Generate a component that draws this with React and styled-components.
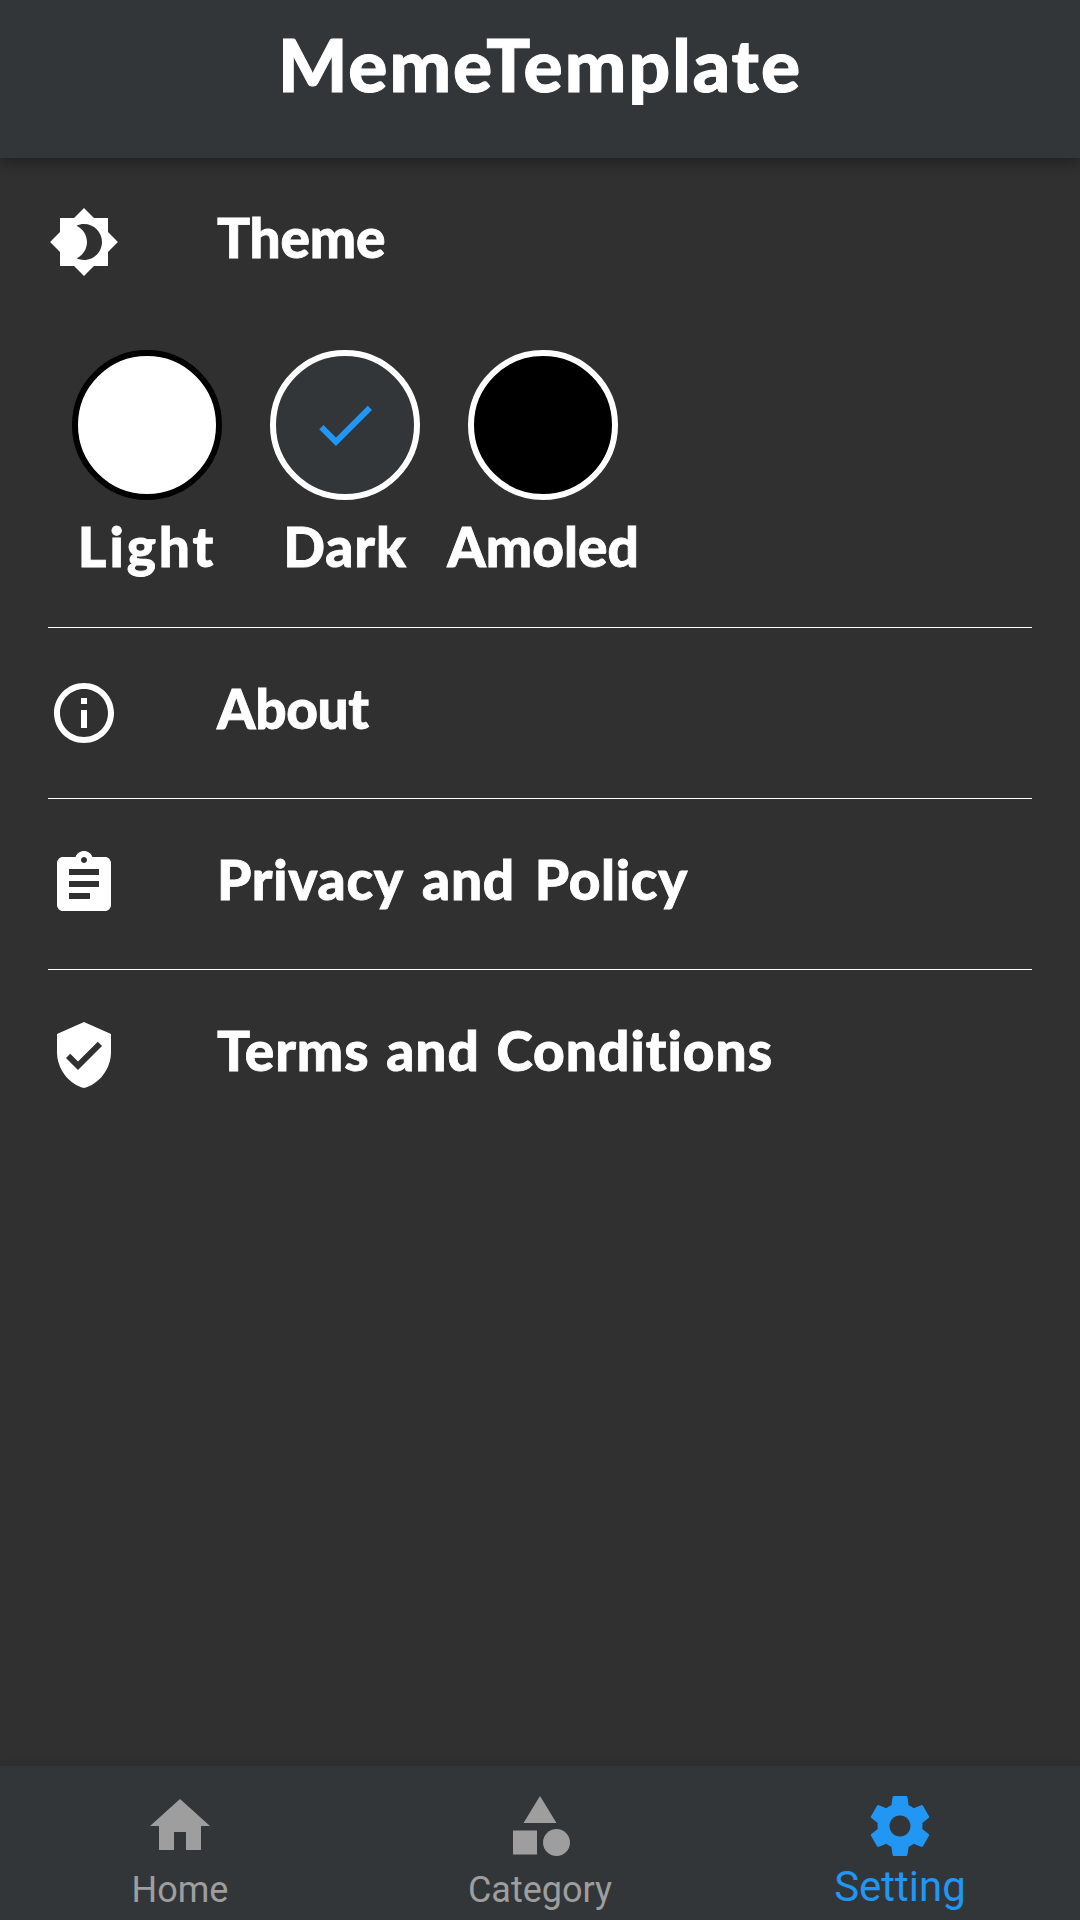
import React, { useState } from 'react'
import styled, { createGlobalStyle } from 'styled-components'
import {
  MdBrightness4,
  MdInfoOutline,
  MdAssignment,
  MdVerifiedUser,
  MdHome,
  MdCategory,
  MdCheck,
} from 'react-icons/md'

const GlobalStyle = createGlobalStyle`
  * {
    box-sizing: border-box;
  }

  body {
    margin: 0;
    background-color: #303030;
    color: #fff;
    font-family: Lato, 'Open Sans', sans-serif;
  }
`

const Screen = styled.div`
  display: flex;
  flex-direction: column;
  height: 1920px;
  overflow: hidden;
  background-color: #303030;
`

const Header = styled.header`
  height: 158px;
  padding-top: 20px;
  text-align: center;
  background-color: #323639;
  box-shadow: 0 6px 12px rgba(0, 0, 0, .2), 0 3px 15px rgba(0, 0, 0, .12);
`

const Title = styled.h1`
  margin: 0;
  font-size: 73px;
  line-height: 88px;
  font-weight: 900;
  letter-spacing: 2.05px;
  -webkit-text-stroke: 1px #fff;
`

const Content = styled.main`
  flex: 1;
  padding: 0 48px;
`

const Label = styled.span`
  font-size: 55px;
  line-height: 66px;
  font-weight: 900;
  letter-spacing: ${(p) => p.$spacing}px;
  word-spacing: ${(p) => p.$wordSpacing || 0}px;
  font-variant-ligatures: none;
  white-space: nowrap;
  -webkit-text-stroke: .8px #fff;
`

const Row = styled.div`
  display: flex;
  align-items: center;
  gap: 97px;
  height: ${(p) => p.$height || 170}px;

  svg {
    width: 72px;
    height: 72px;
  }

  ${Label} {
    padding-bottom: 10px;
  }
`

const Divider = styled.hr`
  height: 1px;
  margin: 0;
  border: 0;
  background-color: #fff;
`

const Swatches = styled.div`
  display: flex;
  padding: 24px 0 48px;
`

const Swatch = styled.div`
  display: flex;
  flex-direction: column;
  align-items: center;
  gap: 13px;
  width: 198px;
`

const Circle = styled.div`
  display: flex;
  align-items: center;
  justify-content: center;
  width: 150px;
  height: 150px;
  border: 6px solid ${(p) => p.$border};
  border-radius: 50%;
  background-color: ${(p) => p.$color};

  svg {
    width: 72px;
    height: 72px;
    color: #2196f3;
  }
`

const Nav = styled.nav`
  display: flex;
  height: 154px;
  background-color: #323639;
  box-shadow: 0 0 8px rgba(0, 0, 0, .15);
`

const NavItem = styled.div`
  display: flex;
  flex: 1;
  flex-direction: column;
  align-items: center;
  padding-top: 24px;
  color: ${(p) => (p.$active ? '#2196f3' : '#9e9e9e')};

  svg {
    width: 72px;
    height: 72px;
  }
`

const NavLabel = styled.span`
  margin-top: ${(p) => (p.$active ? 0 : 7)}px;
  font-family: Roboto, sans-serif;
  font-size: ${(p) => (p.$active ? 42 : 36)}px;
  line-height: ${(p) => (p.$active ? 49 : 42)}px;
`

const SettingsIcon = () => (
  <svg viewBox="0 0 24 24" fill="currentColor">
    <path d="M19.43 12.98c.04-.32.07-.64.07-.98s-.03-.66-.07-.98l2.11-1.65c.19-.15.24-.42.12-.64l-2-3.46c-.12-.22-.39-.3-.61-.22l-2.49 1c-.52-.4-1.08-.73-1.69-.98l-.38-2.65C14.46 2.18 14.25 2 14 2h-4c-.25 0-.46.18-.49.42l-.38 2.65c-.61.25-1.17.59-1.69.98l-2.49-1c-.23-.09-.49 0-.61.22l-2 3.46c-.13.22-.07.49.12.64l2.11 1.65c-.04.32-.07.65-.07.98s.03.66.07.98l-2.11 1.65c-.19.15-.24.42-.12.64l2 3.46c.12.22.39.3.61.22l2.49-1c.52.4 1.08.73 1.69.98l.38 2.65c.03.24.24.42.49.42h4c.25 0 .46-.18.49-.42l.38-2.65c.61-.25 1.17-.59 1.69-.98l2.49 1c.23.09.49 0 .61-.22l2-3.46c.12-.22.07-.49-.12-.64l-2.11-1.65zM12 15.5c-1.93 0-3.5-1.57-3.5-3.5s1.57-3.5 3.5-3.5 3.5 1.57 3.5 3.5-1.57 3.5-3.5 3.5z" />
  </svg>
)

const themes = [
  { name: 'Light', color: '#fff', border: '#000', spacing: 2.9 },
  { name: 'Dark', color: '#323639', border: '#fff', spacing: 0.85 },
  { name: 'Amoled', color: '#000', border: '#fff', spacing: 0 },
]

const links = [
  { name: 'About', Icon: MdInfoOutline, spacing: -0.4 },
  { name: 'Privacy and Policy', Icon: MdAssignment, spacing: 0.7, wordSpacing: 6 },
  { name: 'Terms and Conditions', Icon: MdVerifiedUser, spacing: 1, wordSpacing: 2.5 },
]

const tabs = [
  { name: 'Home', Icon: MdHome },
  { name: 'Category', Icon: MdCategory },
  { name: 'Setting', Icon: SettingsIcon },
]

const App = () => {
  const [theme, setTheme] = useState('Dark')
  const [tab, setTab] = useState('Setting')

  return (
    <>
      <GlobalStyle />
      <Screen>
        <Header>
          <Title>MemeTemplate</Title>
        </Header>
        <Content>
          <Row $height={168}>
            <MdBrightness4 />
            <Label $spacing={-0.2}>Theme</Label>
          </Row>
          <Swatches>
            {themes.map((item) => (
              <Swatch key={item.name} onClick={() => setTheme(item.name)}>
                <Circle $color={item.color} $border={item.border}>
                  {theme === item.name && <MdCheck />}
                </Circle>
                <Label $spacing={item.spacing}>{item.name}</Label>
              </Swatch>
            ))}
          </Swatches>
          {links.map(({ name, Icon, spacing, wordSpacing }) => (
            <React.Fragment key={name}>
              <Divider />
              <Row>
                <Icon />
                <Label $spacing={spacing} $wordSpacing={wordSpacing}>{name}</Label>
              </Row>
            </React.Fragment>
          ))}
        </Content>
        <Nav>
          {tabs.map(({ name, Icon }) => (
            <NavItem key={name} $active={tab === name} onClick={() => setTab(name)}>
              <Icon />
              <NavLabel $active={tab === name}>{name}</NavLabel>
            </NavItem>
          ))}
        </Nav>
      </Screen>
    </>
  )
}

export default App
